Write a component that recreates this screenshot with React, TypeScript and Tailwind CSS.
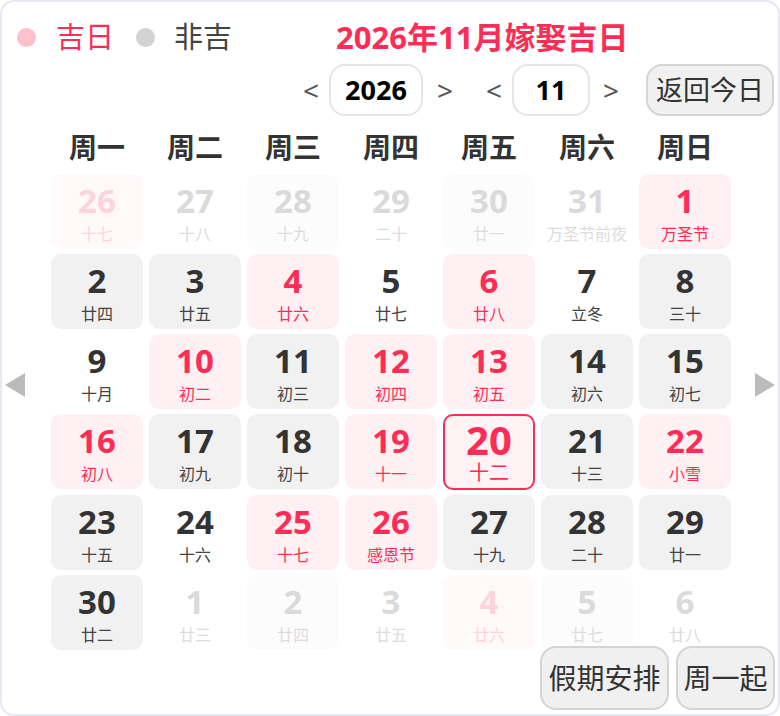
import React from "react";

type Kind = "pink" | "gray" | "none" | "fPink" | "fGray" | "fNone" | "today";

interface Day {
  n: number;
  l: string;
  k: Kind;
}

const rows: Day[][] = [
  [
    { n: 26, l: "十七", k: "fPink" },
    { n: 27, l: "十八", k: "fNone" },
    { n: 28, l: "十九", k: "fGray" },
    { n: 29, l: "二十", k: "fNone" },
    { n: 30, l: "廿一", k: "fGray" },
    { n: 31, l: "万圣节前夜", k: "fNone" },
    { n: 1, l: "万圣节", k: "pink" },
  ],
  [
    { n: 2, l: "廿四", k: "gray" },
    { n: 3, l: "廿五", k: "gray" },
    { n: 4, l: "廿六", k: "pink" },
    { n: 5, l: "廿七", k: "none" },
    { n: 6, l: "廿八", k: "pink" },
    { n: 7, l: "立冬", k: "none" },
    { n: 8, l: "三十", k: "gray" },
  ],
  [
    { n: 9, l: "十月", k: "none" },
    { n: 10, l: "初二", k: "pink" },
    { n: 11, l: "初三", k: "gray" },
    { n: 12, l: "初四", k: "pink" },
    { n: 13, l: "初五", k: "pink" },
    { n: 14, l: "初六", k: "gray" },
    { n: 15, l: "初七", k: "gray" },
  ],
  [
    { n: 16, l: "初八", k: "pink" },
    { n: 17, l: "初九", k: "gray" },
    { n: 18, l: "初十", k: "gray" },
    { n: 19, l: "十一", k: "pink" },
    { n: 20, l: "十二", k: "today" },
    { n: 21, l: "十三", k: "gray" },
    { n: 22, l: "小雪", k: "pink" },
  ],
  [
    { n: 23, l: "十五", k: "gray" },
    { n: 24, l: "十六", k: "none" },
    { n: 25, l: "十七", k: "pink" },
    { n: 26, l: "感恩节", k: "pink" },
    { n: 27, l: "十九", k: "gray" },
    { n: 28, l: "二十", k: "gray" },
    { n: 29, l: "廿一", k: "gray" },
  ],
  [
    { n: 30, l: "廿二", k: "gray" },
    { n: 1, l: "廿三", k: "fNone" },
    { n: 2, l: "廿四", k: "fGray" },
    { n: 3, l: "廿五", k: "fNone" },
    { n: 4, l: "廿六", k: "fPink" },
    { n: 5, l: "廿七", k: "fGray" },
    { n: 6, l: "廿八", k: "fNone" },
  ],
];

const cellBg: Record<Kind, string> = {
  pink: "bg-[#fff0f3]",
  gray: "bg-[#f1f1f1]",
  none: "bg-transparent",
  fPink: "bg-[#fff9fa]",
  fGray: "bg-[#fcfcfc]",
  fNone: "bg-transparent",
  today: "bg-[#fff3f5] border-2 border-[#ff2d55]",
};

const numColor: Record<Kind, string> = {
  pink: "text-[#ff2d55]",
  gray: "text-[#333333]",
  none: "text-[#333333]",
  fPink: "text-[#ffd3dc]",
  fGray: "text-[#dadada]",
  fNone: "text-[#dadada]",
  today: "text-[#ff2d55]",
};

const lunarColor: Record<Kind, string> = {
  pink: "text-[#ff2d55]",
  gray: "text-[#444444]",
  none: "text-[#444444]",
  fPink: "text-[#ffd3dc]",
  fGray: "text-[#dcdcdc]",
  fNone: "text-[#dcdcdc]",
  today: "text-[#ff2d55]",
};

const weekdays = ["周一", "周二", "周三", "周四", "周五", "周六", "周日"];

function Cell({ d }: { d: Day }) {
  if (d.k === "today") {
    return (
      <div className={`h-[76px] rounded-[10px] flex flex-col items-center ${cellBg[d.k]}`}>
        <span className={`mt-[4px] text-[40px] leading-[40px] font-bold ${numColor[d.k]}`}>{d.n}</span>
        <span className={`mt-[2px] text-[20px] leading-[22px] ${lunarColor[d.k]}`}>{d.l}</span>
      </div>
    );
  }
  return (
    <div className={`h-[75px] rounded-[10px] flex flex-col items-center ${cellBg[d.k]}`}>
      <span className={`mt-[8px] text-[33px] leading-[38px] font-bold ${numColor[d.k]}`}>{d.n}</span>
      <span className={`mt-[4px] text-[16px] leading-[20px] whitespace-nowrap ${lunarColor[d.k]}`}>{d.l}</span>
    </div>
  );
}

export default function App() {
  return (
    <div
      className="w-[780px] h-[716px] bg-white border-2 border-[#e6e9f3] rounded-[14px] overflow-hidden"
      style={{ fontFamily: '"Noto Sans", "Noto Sans CJK SC", sans-serif' }}
    >
      <div className="h-[62px] pt-[8px] flex items-center">
        <span className="ml-[15px] w-[19px] h-[19px] rounded-full bg-[#ffc0cb]"></span>
        <span className="ml-[20px] text-[29px] text-[#ff2d55]">吉日</span>
        <span className="ml-[22px] w-[19px] h-[19px] rounded-full bg-[#d3d3d3]"></span>
        <span className="ml-[19px] text-[29px] text-[#444444]">非吉</span>
        <span className="ml-[104px] text-[31px] font-bold text-[#ff2d55]">2026年11月嫁娶吉日</span>
      </div>

      <div className="h-[52px] flex items-center justify-end pr-[4px]">
        <span className="w-[14px] text-[28px] text-[#555555] leading-none">&lt;</span>
        <div className="ml-[12px] w-[94px] h-[52px] rounded-[16px] border-2 border-[#e4e5ea] flex items-center justify-center text-[27px] font-bold text-black">
          2026
        </div>
        <span className="ml-[14px] w-[14px] text-[28px] text-[#555555] leading-none">&gt;</span>
        <span className="ml-[35px] w-[14px] text-[28px] text-[#555555] leading-none">&lt;</span>
        <div className="ml-[12px] w-[78px] h-[52px] rounded-[16px] border-2 border-[#e4e5ea] flex items-center justify-center text-[27px] font-bold text-black">
          11
        </div>
        <span className="ml-[13px] w-[14px] text-[28px] text-[#555555] leading-none">&gt;</span>
        <button className="ml-[29px] w-[128px] h-[52px] rounded-[16px] border-2 border-[#d4d4d4] bg-[#f0f0f0] text-[27px] text-[#333333]">
          返回今日
        </button>
      </div>

      <div className="h-[58px] pt-[4px] pl-[49px] grid grid-cols-[repeat(7,92px)] gap-x-[6px] items-center">
        {weekdays.map((w) => (
          <span key={w} className="text-center text-[28px] font-bold text-[#333333]">
            {w}
          </span>
        ))}
      </div>

      <div className="flex">
        <div className="w-[49px] shrink-0">
          <svg className="ml-[3px] mt-[199px]" width="20" height="24" viewBox="0 0 20 24">
            <polygon points="20,0 20,24 0,12" fill="#bbbbbb" />
          </svg>
        </div>
        <div className="grid grid-cols-[repeat(7,92px)] gap-x-[6px] gap-y-[5px]">
          {rows.map((r, i) =>
            r.map((d, j) => <Cell key={`${i}-${j}`} d={d} />)
          )}
        </div>
        <div className="flex-1">
          <svg className="ml-[24px] mt-[199px]" width="20" height="24" viewBox="0 0 20 24">
            <polygon points="0,0 0,24 20,12" fill="#bbbbbb" />
          </svg>
        </div>
      </div>

      <div className="flex justify-end gap-[7px] pr-[3px] mt-[-4px]">
        <button className="w-[129px] h-[64px] rounded-[16px] border-2 border-[#d4d4d4] bg-[#f0f0f0] text-[28px] text-[#333333]">
          假期安排
        </button>
        <button className="w-[99px] h-[64px] rounded-[16px] border-2 border-[#d4d4d4] bg-[#f0f0f0] text-[28px] text-[#333333]">
          周一起
        </button>
      </div>
    </div>
  );
}
